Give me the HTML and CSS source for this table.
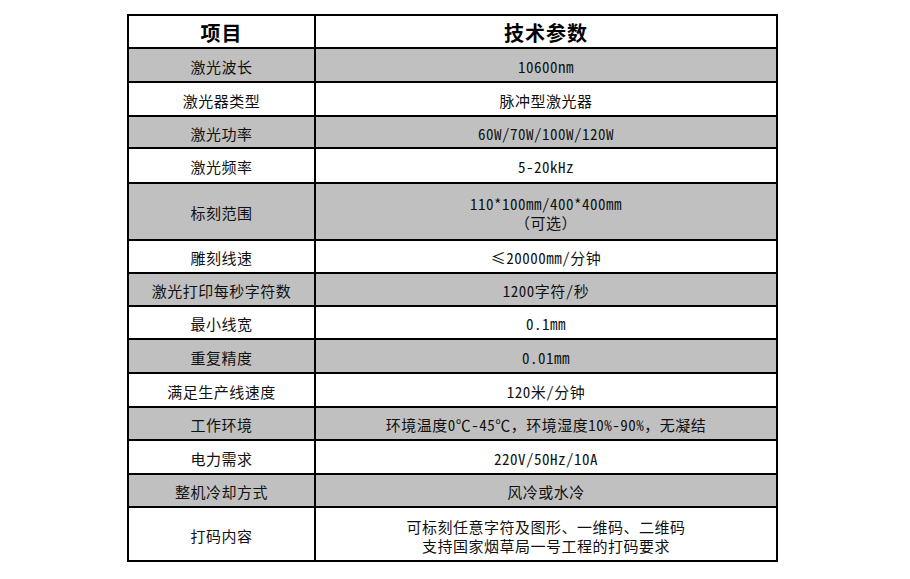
FILE: index.html
```html
<!DOCTYPE html>
<html lang="zh-CN">
<head>
<meta charset="utf-8">
<title>技术参数</title>
<link rel="stylesheet" href="styles.css">
</head>
<body>
<div class="spec">
  <div class="cell head h33">项目</div>
  <div class="cell head wide h33">技术参数</div>

  <div class="cell gray h34">激光波长</div>
  <div class="cell gray h34">10600nm</div>

  <div class="cell h34">激光器类型</div>
  <div class="cell h34">脉冲型激光器</div>

  <div class="cell gray h32">激光功率</div>
  <div class="cell gray h32">60W/70W/100W/120W</div>

  <div class="cell h35">激光频率</div>
  <div class="cell h35">5-20kHz</div>

  <div class="cell gray h57">标刻范围</div>
  <div class="cell gray h57 two"><span>110*100mm/400*400mm</span><span>（可选）</span></div>

  <div class="cell h33">雕刻线速</div>
  <div class="cell h33">≤20000mm/分钟</div>

  <div class="cell gray h33">激光打印每秒字符数</div>
  <div class="cell gray h33">1200字符/秒</div>

  <div class="cell h33">最小线宽</div>
  <div class="cell h33">0.1mm</div>

  <div class="cell gray h34">重复精度</div>
  <div class="cell gray h34">0.01mm</div>

  <div class="cell h34">满足生产线速度</div>
  <div class="cell h34">120米/分钟</div>

  <div class="cell gray h33">工作环境</div>
  <div class="cell gray h33">环境温度0℃-45℃，环境湿度10%-90%，无凝结</div>

  <div class="cell h34">电力需求</div>
  <div class="cell h34">220V/50Hz/10A</div>

  <div class="cell gray h33">整机冷却方式</div>
  <div class="cell gray h33">风冷或水冷</div>

  <div class="cell h54">打码内容</div>
  <div class="cell h54 two"><span>可标刻任意字符及图形、一维码、二维码</span><span>支持国家烟草局一号工程的打码要求</span></div>
</div>
</body>
</html>
```

FILE: styles.css
```css
html, body {
  margin: 0;
  padding: 0;
  background: #fff;
}
body {
  padding: 14px 0 0 127px;
  font-family: "Noto Sans Mono CJK SC", "Noto Sans CJK SC", sans-serif;
  color: #111;
}
.spec {
  display: grid;
  grid-template-columns: 187px 462px;
  width: 649px;
  border-top: 2px solid #000;
  border-left: 2px solid #000;
}
.cell {
  box-sizing: border-box;
  border-right: 2px solid #000;
  border-bottom: 2px solid #000;
  display: flex;
  flex-direction: column;
  align-items: center;
  justify-content: center;
  padding-top: 3px;
  font-size: 15px;
  letter-spacing: 0.5px;
  line-height: 18px;
  white-space: nowrap;
  background: #fff;
}
.gray { background: #c0c0c0; }
.head {
  font-size: 20px;
  font-weight: 700;
  letter-spacing: 1px;
  padding-top: 2px;
  color: #000;
}
.two { line-height: 19px; }
.h32 { height: 32px; }
.h33 { height: 33px; }
.h34 { height: 34px; }
.h35 { height: 35px; }
.h54 { height: 54px; }
.h57 { height: 57px; }
```
